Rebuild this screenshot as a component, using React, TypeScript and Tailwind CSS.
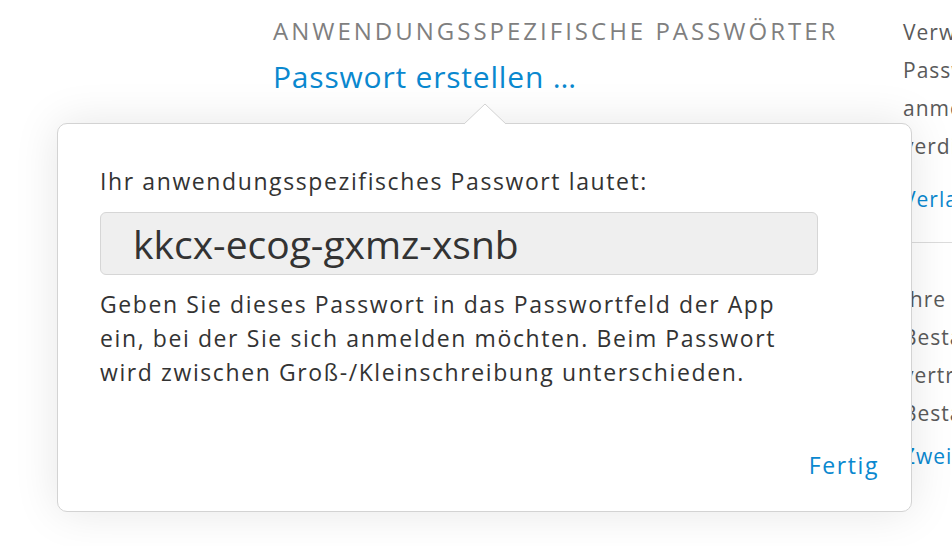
import React from "react";

export default function App() {
  return (
    <div className="relative w-[952px] h-[546px] overflow-hidden bg-white font-['Open_Sans','Noto_Sans',sans-serif]">
      {/* background page */}
      <div className="flex">
        <div className="w-[273px] shrink-0" />
        <div className="w-[630px] shrink-0 pt-[13px]">
          <div className="text-[24px] leading-[36px] tracking-[3px] text-[#7f7f7f] whitespace-nowrap">ANWENDUNGSSPEZIFISCHE PASSWÖRTER</div>
          <div className="mt-[8px] text-[30px] leading-[40px] tracking-[0.8px] text-[#0a88cf] whitespace-nowrap">Passwort erstellen …</div>
        </div>
        <div className="w-[220px] shrink-0 pt-[13px] text-[21px] leading-[38px] tracking-[1px] text-[#5a5a5a] whitespace-nowrap">
          <div>Verwenden Sie</div>
          <div>Passwörter, um sich</div>
          <div>anmelden zu können</div>
          <div>verdient haben.</div>
          <div className="mt-[15px] text-[#0a88cf]">Verlauf anzeigen</div>
          <div className="mt-[24px] border-t border-[#dcdcdc] pt-[37px]">
            <div>Ihre Geräte</div>
            <div>Bestätigen Sie</div>
            <div>vertrauenswürdige</div>
            <div>Bestätigung</div>
            <div className="mt-[5px] text-[#0a88cf]">Zwei-Faktor</div>
          </div>
        </div>
      </div>

      {/* popover */}
      <div className="absolute left-[57px] top-[123px] w-[855px] h-[389px] rounded-[10px] border border-[#d3d3d3] bg-white shadow-[0_0_45px_rgba(0,0,0,0.10)]">
        <svg className="absolute left-[406px] top-[-21px]" width="42" height="22" viewBox="0 0 42 22">
          <path d="M0 21 L21 1 L42 21" fill="white" stroke="#d3d3d3" strokeWidth="1" />
          <rect x="1" y="21" width="40" height="2" fill="white" />
        </svg>
        <div className="pl-[42px] pr-[32px] pt-[42px]">
          <div className="text-[23px] leading-[30px] tracking-[1.6px] text-[#333] whitespace-nowrap">Ihr anwendungsspezifisches Passwort lautet:</div>
          <div className="mt-[16px] w-[718px] h-[63px] rounded-[6px] border border-[#d6d6d6] bg-[#efefef] flex items-center pl-[32px] text-[39px] leading-[44px] text-[#333]">
            kkcx-ecog-gxmz-xsnb
          </div>
          <div className="mt-[12px] text-[23px] leading-[34px] tracking-[1.6px] text-[#333] whitespace-nowrap">
            <div>Geben Sie dieses Passwort in das Passwortfeld der App</div>
            <div>ein, bei der Sie sich anmelden möchten. Beim Passwort</div>
            <div>wird zwischen Groß-/Kleinschreibung unterschieden.</div>
          </div>
          <div className="mt-[60px] flex justify-end text-[23px] leading-[32px] tracking-[1.6px] text-[#0a88cf]">Fertig</div>
        </div>
      </div>
    </div>
  );
}
